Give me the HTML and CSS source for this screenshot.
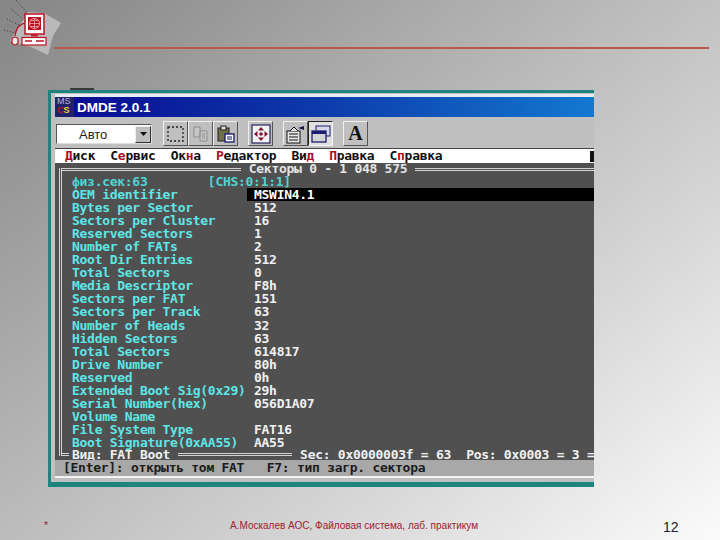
FILE: index.html
```html
<!DOCTYPE html>
<html lang="ru">
<head>
  <meta charset="UTF-8">
  <title>DMDE</title>
  <link rel="stylesheet" href="styles.css">
</head>
<body>
  <div class="slide">
    <div class="slide-header">
      <svg class="logo" width="62" height="58" viewBox="0 0 62 58">
        <path d="M27 12 L43 13 L60 23 L52 36 L47 55 L30 47 L9 41 L16 30 Z" fill="#b9b9b9"/>
        <path d="M15 0 L27 14 M10 9 L24 21 M6 19 L22 27 M3 30 L14 33" stroke="#333" stroke-width="1" stroke-dasharray="1 2" fill="none"/>
        <path d="M24 23 C17 25 15 29 14 36" stroke="#b01020" stroke-width="1.2" fill="none"/>
        <rect x="24" y="14" width="19" height="20" fill="#fff" stroke="#b81424" stroke-width="1.5"/>
        <rect x="27" y="17" width="13" height="13" fill="#b81424"/>
        <circle cx="33.500" cy="23.500" r="5" fill="none" stroke="#f2b8b8" stroke-width=".9"/>
        <path d="M28.500 23.500 H38.500 M33.500 18.500 V28.500 M29.500 20.500 H37.500 M29.500 26.500 H37.500" stroke="#f2b8b8" stroke-width=".7"/>
        <rect x="30" y="34" width="7" height="2.500" fill="#c02030"/>
        <rect x="21" y="37.500" width="24" height="7.500" fill="#fff" stroke="#b81424" stroke-width="1.2"/>
        <path d="M24 41 H31 M35 41 H43" stroke="#b81424" stroke-width="1.3"/>
        <path d="M11 39 Q14 35 17 39 V43 Q14 47 11 43 Z" fill="#f4e8e8" stroke="#b01020" stroke-width="1.2"/>
      </svg>
      <div class="header-rule"></div>
    </div>
    <div class="window-tab"></div>

    <div class="window">
      <div class="titlebar">
        <div class="app-icon"><span class="ms">MS</span><span class="cs"><i>C</i><b>S</b></span></div>
        <span class="app-name">DMDE 2.0.1</span>
      </div>

      <div class="toolbar">
        <div class="combo">
          <span class="combo-value">Авто</span>
          <span class="combo-btn"><svg width="7" height="4" viewBox="0 0 7 4"><path d="M0 0 H7 L3.500 4 Z" fill="#111"/></svg></span>
        </div>
        <div class="tool-group">
          <span class="tool">
            <svg width="17" height="16" viewBox="0 0 17 16"><rect x="1" y="1" width="15" height="14" fill="none" stroke="#222" stroke-width="1.300" stroke-dasharray="2 2"/></svg>
          </span>
          <span class="tool">
            <svg width="17" height="16" viewBox="0 0 17 16"><path d="M2 1 H8 V11 H2 Z M8 5 H15 V15 H8 Z" fill="#c6c6c6" stroke="#8d8d8d"/><path d="M10 8 H13 M10 10 H13 M10 12 H13" stroke="#8d8d8d"/></svg>
          </span>
          <span class="tool">
            <svg width="18" height="18" viewBox="0 0 18 18"><rect x="1" y="3" width="11" height="13" fill="#6f7048" stroke="#222"/><rect x="4" y="1" width="5" height="4" fill="#ddd" stroke="#222"/><rect x="8" y="9" width="9" height="8" fill="#fff" stroke="#14146e" stroke-width="1.300"/><path d="M10 12 H15 M10 14 H15" stroke="#14146e"/></svg>
          </span>
        </div>
        <div class="tool-group">
          <span class="tool">
            <svg width="20" height="20" viewBox="0 0 20 20"><rect x="1" y="1" width="18" height="18" fill="#f2f2f2" stroke="#23235e" stroke-width="1.200"/><path d="M10 3 L13 6.500 H7 Z M10 17 L13 13.500 H7 Z M3 10 L6.500 7 V13 Z M17 10 L13.500 7 V13 Z" fill="#7d1530"/><circle cx="10" cy="10" r="1.800" fill="#7d1530"/></svg>
          </span>
        </div>
        <div class="tool-group">
          <span class="tool">
            <svg width="21" height="20" viewBox="0 0 21 20"><rect x="2" y="7" width="13" height="12" fill="#e8e8e8" stroke="#111"/><path d="M4 10 H13 M4 13 H13 M4 16 H13" stroke="#111"/><path d="M5 7 L9 3 L13 7" fill="#ddd" stroke="#111"/><path d="M13 4 L19 2 V6 Z" fill="#18184e"/></svg>
          </span>
          <span class="tool pressed">
            <svg width="20" height="18" viewBox="0 0 20 18"><rect x="5" y="1" width="14" height="10" fill="#d8d8e4" stroke="#1c1c70"/><rect x="1" y="6" width="14" height="11" fill="#d4d4d4" stroke="#1c1c70" stroke-width="1.300"/><rect x="1" y="6" width="14" height="3" fill="#1c1c70"/></svg>
          </span>
        </div>
        <div class="tool-group">
          <span class="tool letter">A</span>
        </div>
      </div>

      <div class="menubar">
        <span><b>Д</b>иск  С<b>е</b>рвис  Ок<b>н</b>а  <b>Р</b>едактор  Ви<b>д</b>  <b>П</b>равка  С<b>п</b>равка</span>
        <span class="menu-end"></span>
      </div>

      <div class="console">
        <div class="frame">
          <div class="frame-head">
            <span class="line"></span>
            <span class="frame-title">Секторы 0 - 1 048 575</span>
            <span class="line"></span>
          </div>
          <div class="row note">физ.сек:63        [CHS:0:1:1]</div>
          <div class="row sel"><span class="key">OEM identifier</span><span class="val">MSWIN4.1</span></div>
          <div class="row"><span class="key">Bytes per Sector</span><span class="val">512</span></div>
          <div class="row"><span class="key">Sectors per Cluster</span><span class="val">16</span></div>
          <div class="row"><span class="key">Reserved Sectors</span><span class="val">1</span></div>
          <div class="row"><span class="key">Number of FATs</span><span class="val">2</span></div>
          <div class="row"><span class="key">Root Dir Entries</span><span class="val">512</span></div>
          <div class="row"><span class="key">Total Sectors</span><span class="val">0</span></div>
          <div class="row"><span class="key">Media Descriptor</span><span class="val">F8h</span></div>
          <div class="row"><span class="key">Sectors per FAT</span><span class="val">151</span></div>
          <div class="row"><span class="key">Sectors per Track</span><span class="val">63</span></div>
          <div class="row"><span class="key">Number of Heads</span><span class="val">32</span></div>
          <div class="row"><span class="key">Hidden Sectors</span><span class="val">63</span></div>
          <div class="row"><span class="key">Total Sectors</span><span class="val">614817</span></div>
          <div class="row"><span class="key">Drive Number</span><span class="val">80h</span></div>
          <div class="row"><span class="key">Reserved</span><span class="val">0h</span></div>
          <div class="row"><span class="key">Extended Boot Sig(0x29)</span><span class="val">29h</span></div>
          <div class="row"><span class="key">Serial Number(hex)</span><span class="val">056D1A07</span></div>
          <div class="row"><span class="key">Volume Name</span><span class="val"></span></div>
          <div class="row"><span class="key">File System Type</span><span class="val">FAT16</span></div>
          <div class="row"><span class="key">Boot Signature(0xAA55)</span><span class="val">AA55</span></div>
          <div class="frame-foot">
            <span class="line stub"></span>
            <span class="foot-text">Вид: FAT Boot</span>
            <span class="line short"></span>
            <span class="foot-text">Sec: 0x0000003f = 63  Pos: 0x0003 = 3 =</span>
          </div>
        </div>
      </div>

      <div class="statusbar">[Enter]: открыть том FAT   F7: тип загр. сектора</div>
    </div>

    <div class="slide-footer">
      <span class="star">*</span>
      <span class="caption">А.Москалев АОС, Файловая система, лаб. практикум</span>
      <span class="page-num">12</span>
    </div>
  </div>
</body>
</html>
```

FILE: styles.css
```css
body {
  margin: 0;
  font-family: 'Liberation Sans', sans-serif;
}
.slide {
  width: 720px;
  height: 540px;
  overflow: hidden;
  display: flex;
  flex-direction: column;
  background: linear-gradient(140deg, #858585 0%, #a8a8a8 30%, #d4d4d4 68%, #fbfbfb 100%);
}
.slide-header {
  height: 88px;
  flex-shrink: 0;
  display: flex;
  align-items: flex-start;
  padding-left: 1px;
}
.logo {
  flex-shrink: 0;
}
.header-rule {
  width: 655px;
  height: 2px;
  margin: 47px 0 0 -9px;
  background: #b8584e;
}
.window-tab {
  width: 24px;
  height: 2px;
  margin-left: 70px;
  flex-shrink: 0;
  background: #3a3a3a;
}
.window {
  width: 546px;
  height: 397px;
  margin-left: 48px;
  flex-shrink: 0;
  box-sizing: border-box;
  overflow: hidden;
  background: #c0c0c0;
  border-top: 3px solid #1f8380;
  border-bottom: 5px solid #1f8380;
  border-left: 3px solid #1f8380;
  padding: 1px 0 0 4px;
  display: flex;
  flex-direction: column;
}
.titlebar {
  height: 20px;
  flex-shrink: 0;
  border-top: 3px solid #e4eef0;
  display: flex;
  align-items: center;
  gap: 3px;
  background: linear-gradient(90deg, #0a0a90 0%, #0c36a8 45%, #1478d0 100%);
}
.app-icon {
  width: 19px;
  height: 20px;
  background: #23236a;
  display: flex;
  flex-direction: column;
  font-size: 9px;
  line-height: 9px;
  padding-left: 2px;
  box-sizing: border-box;
}
.app-icon .ms {
  color: #b8b8c8;
}
.app-icon .cs i {
  color: #b01818;
  font-style: normal;
  font-weight: bold;
}
.app-icon .cs b {
  color: #e8d040;
}
.app-name {
  color: #fff;
  font-size: 13.5px;
  font-weight: bold;
}
.toolbar {
  height: 31px;
  flex-shrink: 0;
  box-sizing: border-box;
  padding: 4px 0 0 1px;
  display: flex;
  align-items: flex-start;
  gap: 10px;
}
.combo {
  width: 96px;
  height: 20px;
  margin-top: 3px;
  margin-right: 1px;
  box-sizing: border-box;
  background: #fff;
  border: 1px solid #555;
  border-right-color: #ddd;
  border-bottom-color: #ddd;
  display: flex;
  align-items: center;
  justify-content: space-between;
  color: #222;
  font-size: 13px;
}
.combo-value {
  padding-left: 22px;
}
.combo-btn {
  width: 16px;
  height: 17px;
  box-sizing: border-box;
  background: #bdbdbd;
  border: 1px solid;
  border-color: #eee #333 #333 #eee;
  display: flex;
  align-items: center;
  justify-content: center;
}
.tool-group {
  display: flex;
}
.tool {
  width: 25px;
  height: 25px;
  box-sizing: border-box;
  background: #bfbfbf;
  border: 1px solid;
  border-color: #f0f0f0 #555 #555 #f0f0f0;
  display: flex;
  align-items: center;
  justify-content: center;
}
.tool.pressed {
  border-color: #222 #f4f4f4 #f4f4f4 #222;
  background: #e0e0e0;
}
.tool.letter {
  font-family: 'Liberation Serif', serif;
  font-weight: bold;
  font-size: 20px;
  color: #111;
}
.menubar {
  height: 14px;
  flex-shrink: 0;
  background: #fff;
  border-top: 1px solid #444;
  padding-left: 10px;
  display: flex;
  justify-content: space-between;
  align-items: center;
  font-family: 'DejaVu Sans Mono', monospace;
  font-weight: bold;
  font-size: 13px;
  letter-spacing: -0.28px;
  line-height: 14px;
  white-space: pre;
  color: #111;
}
.menubar b {
  color: #a81020;
}
.menu-end {
  width: 4px;
  height: 11px;
  background: #111;
}
.console {
  flex: 1;
  min-height: 0;
  box-sizing: border-box;
  padding: 5px 0 4px 4px;
  background: #505050;
  font-family: 'DejaVu Sans Mono', monospace;
  font-weight: bold;
  font-size: 13px;
  letter-spacing: -0.28px;
  line-height: 13.05px;
}
.frame {
  height: 100%;
  box-sizing: border-box;
  border-left: 3px double #d4d4d4;
}
.frame-head {
  height: 7px;
  display: flex;
  align-items: flex-start;
}
.line {
  flex: 1;
  height: 3px;
  box-sizing: border-box;
  border-top: 3px double #d4d4d4;
}
.frame-title {
  margin: -6px 8px 0;
  color: #e4e4e4;
}
.row {
  display: flex;
  height: 13.05px;
  padding-left: 10px;
  color: #5fe6e6;
  white-space: pre;
}
.key {
  width: 175px;
  flex-shrink: 0;
}
.val {
  flex: 1;
  padding-left: 7px;
  color: #f0f0f0;
}
.row.sel .val {
  background: #000;
  color: #fff;
}
.row.note {
  color: #50d4d4;
}
.frame-foot {
  height: 7px;
  display: flex;
  align-items: flex-end;
}
.line.stub {
  flex: none;
  width: 7px;
  margin-right: 3px;
}
.line.short {
  flex: none;
  width: 114px;
  margin: 0 8px;
}
.foot-text {
  flex-shrink: 0;
  margin-bottom: -5px;
  color: #f0f0f0;
  white-space: pre;
}
.statusbar {
  height: 16px;
  flex-shrink: 0;
  margin-bottom: 4px;
  padding-left: 8px;
  background: #a8a8a8;
  border-bottom: 2px solid #f4f4f4;
  font-family: 'DejaVu Sans Mono', monospace;
  font-weight: bold;
  font-size: 13px;
  letter-spacing: -0.28px;
  line-height: 16px;
  white-space: pre;
  color: #1c1c1c;
}
.slide-footer {
  flex: 1;
  display: flex;
  align-items: center;
  padding: 23px 0 0 44px;
  box-sizing: border-box;
}
.star {
  width: 186px;
  color: #8a1a2a;
  font-size: 10px;
}
.caption {
  width: 433px;
  color: #a02030;
  font-size: 10px;
}
.page-num {
  margin-top: 3px;
  color: #222;
  font-size: 14px;
}
```
